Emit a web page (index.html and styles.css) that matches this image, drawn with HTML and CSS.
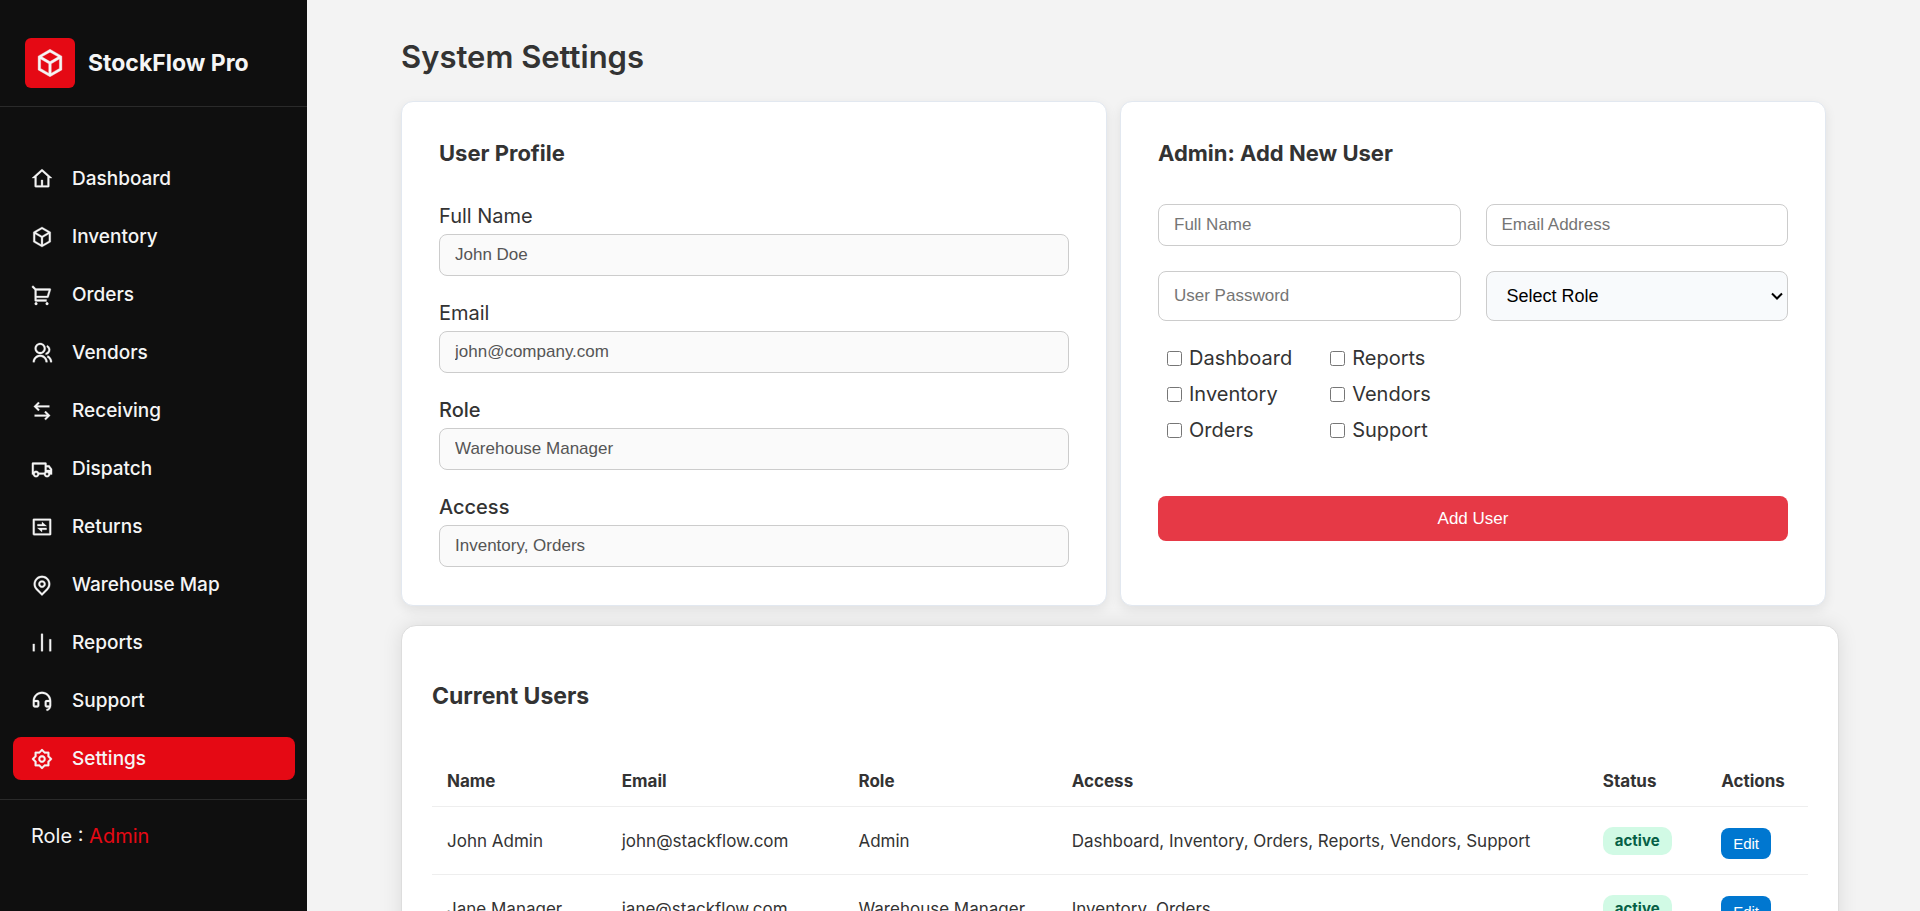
FILE: index.html
```html
<!DOCTYPE html>
<html lang="en">
<head>
<meta charset="utf-8">
<meta name="viewport" content="width=device-width, initial-scale=1">
<title>StockFlow Pro - System Settings</title>
<link rel="stylesheet" href="styles.css">
</head>
<body>
<div class="app">
  <aside class="sidebar">
    <div class="brand">
      <span class="brand-logo"><svg class="icon" viewBox="0 0 24 24" aria-hidden="true"><path d="M12 1L21.5 6.5V17.5L12 23L2.5 17.5V6.5L12 1ZM5.49388 7.0777L12.0001 10.8444L18.5062 7.07774L12 3.311L5.49388 7.0777ZM4.5 8.81329V16.3469L11.0001 20.1101V12.5765L4.5 8.81329ZM13.0001 20.11L19.5 16.3469V8.81337L13.0001 12.5765V20.11Z"/></svg></span>
      <span class="brand-name">StockFlow Pro</span>
    </div>
    <nav class="nav">
      <a class="nav-link" href="#"><svg class="icon" viewBox="0 0 24 24" aria-hidden="true"><path d="M19 21H5C4.44772 21 4 20.5523 4 20V11L1 11L11.3273 1.6115C11.7087 1.26475 12.2913 1.26475 12.6727 1.6115L23 11L20 11V20C20 20.5523 19.5523 21 19 21ZM13 19H18V9.15745L12 3.7029L6 9.15745V19H11V13H13V19Z"/></svg>Dashboard</a>
      <a class="nav-link" href="#"><svg class="icon" viewBox="0 0 24 24" aria-hidden="true"><path d="M12 1L21.5 6.5V17.5L12 23L2.5 17.5V6.5L12 1ZM5.49388 7.0777L12.0001 10.8444L18.5062 7.07774L12 3.311L5.49388 7.0777ZM4.5 8.81329V16.3469L11.0001 20.1101V12.5765L4.5 8.81329ZM13.0001 20.11L19.5 16.3469V8.81337L13.0001 12.5765V20.11Z"/></svg>Inventory</a>
      <a class="nav-link" href="#"><svg class="icon" viewBox="0 0 24 24" aria-hidden="true"><path d="M4.00436 6.41686L0.761719 3.17422L2.17593 1.76001L5.41857 5.00265H20.6603C21.2126 5.00265 21.6603 5.45037 21.6603 6.00265C21.6603 6.09997 21.6461 6.19678 21.6182 6.29L19.2182 14.29C19.0913 14.713 18.7019 15.0027 18.2603 15.0027H6.00436V17.0027H17.0044V19.0027H5.00436C4.45207 19.0027 4.00436 18.5549 4.00436 18.0027V6.41686ZM6.00436 7.00265V13.0027H17.5163L19.3163 7.00265H6.00436ZM5.50436 23.0027C4.67593 23.0027 4.00436 22.3311 4.00436 21.5027C4.00436 20.6742 4.67593 20.0027 5.50436 20.0027C6.33279 20.0027 7.00436 20.6742 7.00436 21.5027C7.00436 22.3311 6.33279 23.0027 5.50436 23.0027ZM17.5044 23.0027C16.6759 23.0027 16.0044 22.3311 16.0044 21.5027C16.0044 20.6742 16.6759 20.0027 17.5044 20.0027C18.3328 20.0027 19.0044 20.6742 19.0044 21.5027C19.0044 22.3311 18.3328 23.0027 17.5044 23.0027Z"/></svg>Orders</a>
      <a class="nav-link" href="#"><svg class="icon" viewBox="0 0 24 24" aria-hidden="true"><path d="M2 22C2 17.5817 5.58172 14 10 14C14.4183 14 18 17.5817 18 22H16C16 18.6863 13.3137 16 10 16C6.68629 16 4 18.6863 4 22H2ZM10 13C6.685 13 4 10.315 4 7C4 3.685 6.685 1 10 1C13.315 1 16 3.685 16 7C16 10.315 13.315 13 10 13ZM10 11C12.21 11 14 9.21 14 7C14 4.79 12.21 3 10 3C7.79 3 6 4.79 6 7C6 9.21 7.79 11 10 11ZM18.2837 14.7028C21.0644 15.9561 23 18.752 23 22H21C21 19.564 19.5483 17.4671 17.4628 16.5271L18.2837 14.7028ZM17.5962 3.41321C19.5944 4.23703 21 6.20361 21 8.5C21 11.3702 18.8042 13.7252 16 13.9776V11.9646C17.6967 11.7222 19 10.264 19 8.5C19 7.11935 18.2016 5.92603 17.041 5.35635L17.5962 3.41321Z"/></svg>Vendors</a>
      <a class="nav-link" href="#"><svg class="icon" viewBox="0 0 24 24" aria-hidden="true"><path d="M16.0503 12.0498L21 16.9996L16.0503 21.9493L14.636 20.5351L17.172 17.9988L4 17.9996V15.9996L17.172 15.9988L14.636 13.464L16.0503 12.0498ZM7.94975 2.0498L9.36396 3.46402L6.828 5.9988L20 5.99955V7.99955L6.828 7.9988L9.36396 10.5351L7.94975 11.9493L3 6.99955L7.94975 2.0498Z"/></svg>Receiving</a>
      <a class="nav-link" href="#"><svg class="icon" viewBox="0 0 24 24" aria-hidden="true"><path d="M8.96456 18C8.72194 19.6961 7.26324 21 5.5 21C3.73676 21 2.27806 19.6961 2.03544 18H1V6C1 5.44772 1.44772 5 2 5H16C16.5523 5 17 5.44772 17 6V8H20L23 12.0557V18H20.9646C20.7219 19.6961 19.2632 21 17.5 21C15.7368 21 14.2781 19.6961 14.0354 18H8.96456ZM15 7H3V15.0505C3.63526 14.4022 4.52066 14 5.5 14C6.8962 14 8.10145 14.8175 8.66318 16H14.3368C14.5045 15.647 14.7296 15.3264 15 15.0505V7ZM17 13H21V12.715L18.9917 10H17V13ZM17.5 19C18.1531 19 18.7087 18.5826 18.9146 18C18.9699 17.8436 19 17.6753 19 17.5C19 16.6716 18.3284 16 17.5 16C16.6716 16 16 16.6716 16 17.5C16 17.6753 16.0301 17.8436 16.0854 18C16.2913 18.5826 16.8469 19 17.5 19ZM7 17.5C7 16.6716 6.32843 16 5.5 16C4.67157 16 4 16.6716 4 17.5C4 17.6753 4.03008 17.8436 4.08535 18C4.29127 18.5826 4.84689 19 5.5 19C6.15311 19 6.70873 18.5826 6.91465 18C6.96992 17.8436 7 17.6753 7 17.5Z"/></svg>Dispatch</a>
      <a class="nav-link" href="#"><svg class="icon" viewBox="0 0 24 24" aria-hidden="true"><path d="M3 3H21C21.5523 3 22 3.44772 22 4V20C22 20.5523 21.5523 21 21 21H3C2.44772 21 2 20.5523 2 20V4C2 3.44772 2.44772 3 3 3ZM4 5V19H20V5H4ZM12 9V6.5L17 11H7V9H12ZM7 13H17V15H12V17.5L7 13Z"/></svg>Returns</a>
      <a class="nav-link" href="#"><svg class="icon" viewBox="0 0 24 24" aria-hidden="true"><path d="M12 23.7279L5.63604 17.364C2.12132 13.8492 2.12132 8.15076 5.63604 4.63604C9.15076 1.12132 14.8492 1.12132 18.364 4.63604C21.8787 8.15076 21.8787 13.8492 18.364 17.364L12 23.7279ZM16.9497 15.9497C19.6834 13.2161 19.6834 8.78392 16.9497 6.05025C14.2161 3.31658 9.78392 3.31658 7.05025 6.05025C4.31658 8.78392 4.31658 13.2161 7.05025 15.9497L12 20.8995L16.9497 15.9497ZM12 15C9.79086 15 8 13.2091 8 11C8 8.79086 9.79086 7 12 7C14.2091 7 16 8.79086 16 11C16 13.2091 14.2091 15 12 15ZM12 13C13.1046 13 14 12.1046 14 11C14 9.89543 13.1046 9 12 9C10.8954 9 10 9.89543 10 11C10 12.1046 10.8954 13 12 13Z"/></svg>Warehouse Map</a>
      <a class="nav-link" href="#"><svg class="icon" viewBox="0 0 24 24" aria-hidden="true"><path d="M2 13H4V21H2V13ZM20 8H22V21H20V8ZM11 2H13V21H11V2Z"/></svg>Reports</a>
      <a class="nav-link" href="#"><svg class="icon" viewBox="0 0 24 24" aria-hidden="true"><path d="M22 17.0022C21.999 19.8731 19.9816 22.2726 17.2872 22.8616L16.6492 20.9476C17.8532 20.7511 18.8765 20.0171 19.4649 19H17C15.8954 19 15 18.1046 15 17V13C15 11.8954 15.8954 11 17 11H19.9381C19.446 7.05369 16.0796 4 12 4C7.92038 4 4.55399 7.05369 4.06189 11H7C8.10457 11 9 11.8954 9 13V17C9 18.1046 8.10457 19 7 19H4C2.89543 19 2 18.1046 2 17V12C2 6.47715 6.47715 2 12 2C17.5228 2 22 6.47715 22 12V17.0022ZM20 17V13H17V17H20ZM4 13V17H7V13H4Z"/></svg>Support</a>
      <a class="nav-link active" href="#" aria-current="page"><svg class="icon" viewBox="0 0 24 24" aria-hidden="true"><path d="M8.68637 4.00008L11.293 1.39348C11.6835 1.00295 12.3167 1.00295 12.7072 1.39348L15.3138 4.00008H19.0001C19.5524 4.00008 20.0001 4.4478 20.0001 5.00008V8.68637L22.6067 11.293C22.9972 11.6835 22.9972 12.3167 22.6067 12.7072L20.0001 15.3138V19.0001C20.0001 19.5524 19.5524 20.0001 19.0001 20.0001H15.3138L12.7072 22.6067C12.3167 22.9972 11.6835 22.9972 11.293 22.6067L8.68637 20.0001H5.00008C4.4478 20.0001 4.00008 19.5524 4.00008 19.0001V15.3138L1.39348 12.7072C1.00295 12.3167 1.00295 11.6835 1.39348 11.293L4.00008 8.68637V5.00008C4.00008 4.4478 4.4478 4.00008 5.00008 4.00008H8.68637ZM6.00008 6.00008V9.5148L3.5148 12.0001L6.00008 14.4854V18.0001H9.5148L12.0001 20.4854L14.4854 18.0001H18.0001V14.4854L20.4854 12.0001L18.0001 9.5148V6.00008H14.4854L12.0001 3.5148L9.5148 6.00008H6.00008ZM12.0001 16.0001C9.79094 16.0001 8.00008 14.2092 8.00008 12.0001C8.00008 9.79094 9.79094 8.00008 12.0001 8.00008C14.2092 8.00008 16.0001 9.79094 16.0001 12.0001C16.0001 14.2092 14.2092 16.0001 12.0001 16.0001ZM12.0001 14.0001C13.1047 14.0001 14.0001 13.1047 14.0001 12.0001C14.0001 10.8955 13.1047 10.0001 12.0001 10.0001C10.8955 10.0001 10.0001 10.8955 10.0001 12.0001C10.0001 13.1047 10.8955 14.0001 12.0001 14.0001Z"/></svg>Settings</a>
    </nav>
    <div class="role">Role : <span class="role-name">Admin</span></div>
  </aside>

  <main class="main">
    <h1 class="page-title">System Settings</h1>
    <div class="panels">
      <section class="card">
        <h2 class="card-title">User Profile</h2>
        <div class="fields">
          <div class="field"><label for="p-name">Full Name</label><input class="input readonly" id="p-name" type="text" value="John Doe" readonly></div>
          <div class="field"><label for="p-email">Email</label><input class="input readonly" id="p-email" type="text" value="john@company.com" readonly></div>
          <div class="field"><label class="strong" for="p-role">Role</label><input class="input readonly" id="p-role" type="text" value="Warehouse Manager" readonly></div>
          <div class="field"><label class="strong" for="p-access">Access</label><input class="input readonly" id="p-access" type="text" value="Inventory, Orders" readonly></div>
        </div>
      </section>

      <section class="card">
        <h2 class="card-title">Admin: Add New User</h2>
        <form class="user-form">
          <div class="form-grid">
            <input class="input" type="text" placeholder="Full Name" aria-label="Full Name">
            <input class="input" type="email" placeholder="Email Address" aria-label="Email Address">
            <input class="input" type="password" placeholder="User Password" aria-label="User Password">
            <select class="input select" aria-label="Role">
              <option>Select Role</option>
              <option>Admin</option>
              <option>Warehouse Manager</option>
            </select>
          </div>
          <div class="checks">
            <label class="check"><input type="checkbox">Dashboard</label>
            <label class="check"><input type="checkbox">Reports</label>
            <label class="check"><input type="checkbox">Inventory</label>
            <label class="check"><input type="checkbox">Vendors</label>
            <label class="check"><input type="checkbox">Orders</label>
            <label class="check"><input type="checkbox">Support</label>
          </div>
          <button class="add-btn" type="button">Add User</button>
        </form>
      </section>
    </div>

    <section class="users-card">
      <h2 class="users-title">Current Users</h2>
      <table class="users">
        <colgroup><col class="c-name"><col class="c-email"><col class="c-role"><col class="c-access"><col class="c-status"><col class="c-actions"></colgroup>
        <thead>
          <tr><th>Name</th><th>Email</th><th>Role</th><th>Access</th><th>Status</th><th>Actions</th></tr>
        </thead>
        <tbody>
          <tr><td>John Admin</td><td>john@stackflow.com</td><td>Admin</td><td>Dashboard, Inventory, Orders, Reports, Vendors, Support</td><td><span class="status">active</span></td><td><button class="edit-btn" type="button">Edit</button></td></tr>
          <tr><td>Jane Manager</td><td>jane@stackflow.com</td><td>Warehouse Manager</td><td>Inventory, Orders</td><td><span class="status">active</span></td><td><button class="edit-btn" type="button">Edit</button></td></tr>
        </tbody>
      </table>
    </section>
  </main>
</div>
</body>
</html>
```
FILE: styles.css
```css
* {
  box-sizing: border-box;
}

body {
  margin: 0;
  background: #f3f3f3;
  color: #333;
  font-family: Inter, sans-serif;
  font-size: 20px;
  line-height: 24px;
}

h1, h2 {
  margin: 0;
}

.app {
  display: flex;
  height: 100vh;
}

.icon {
  flex: none;
  width: 22px;
  height: 22px;
  fill: currentColor;
  stroke: currentColor;
  stroke-width: 0.3;
}

/* Sidebar */
.sidebar {
  flex: none;
  width: 307px;
  background: #0f0f0f;
  color: #f5f5f5;
}

.brand {
  display: flex;
  align-items: center;
  gap: 13px;
  padding: 38px 25px 18px;
  border-bottom: 1px solid #2a2a2a;
}

.brand-logo {
  display: grid;
  place-items: center;
  width: 50px;
  height: 50px;
  border-radius: 6px;
  background: #e50914;
}

.brand-logo .icon {
  width: 30px;
  height: 30px;
}

.brand-name {
  font-size: 23px;
  font-weight: 700;
}

.nav {
  display: flex;
  flex-direction: column;
  gap: 15px;
  padding: 50px 12px 19px 13px;
  border-bottom: 1px solid #2a2a2a;
}

.nav-link {
  display: flex;
  align-items: center;
  gap: 19px;
  height: 43px;
  padding: 0 18px;
  border-radius: 8px;
  color: inherit;
  font-size: 19px;
  font-weight: 500;
  text-decoration: none;
}

.nav-link.active {
  background: #e50914;
}

.role {
  padding: 24px 31px;
}

.role-name {
  color: #e50914;
}

/* Content */
.main {
  flex: 1;
  min-width: 0;
  padding: 38px 81px 40px 94px;
  overflow-y: auto;
  scrollbar-width: none;
}

.page-title {
  font-size: 31px;
  font-weight: 600;
  line-height: 38px;
}

.panels {
  display: grid;
  grid-template-columns: 1fr 1fr;
  gap: 13px;
  margin-top: 25px;
  padding-right: 13px;
}

.card {
  padding: 37px;
  border: 1px solid #e2e8f0;
  border-radius: 12px;
  background: #fff;
  box-shadow: 0 4px 12px rgba(0, 0, 0, 0.08);
}

.card-title {
  font-size: 22px;
  font-weight: 700;
  line-height: 28px;
}

.fields {
  display: grid;
  gap: 25px;
  margin: 37px 0 1px;
}

.field {
  display: grid;
  gap: 6px;
}

.strong {
  font-weight: 500;
}

.input {
  width: 100%;
  height: 42px;
  padding: 0 15px;
  border: 1px solid #ccc;
  border-radius: 8px;
  background: #fff;
  font-family: "Liberation Sans", Arial, sans-serif;
  font-size: 17px;
}

.readonly {
  background: #fafafa;
  color: #555;
}

.form-grid {
  display: grid;
  grid-template-columns: 1fr 1fr;
  grid-template-rows: 42px 50px;
  gap: 25px;
  margin-top: 37px;
}

.form-grid .input {
  height: 100%;
}

.form-grid .select {
  appearance: none;
  padding: 0 20px;
  background: #f8fafc url("data:image/svg+xml,%3Csvg xmlns='http://www.w3.org/2000/svg' width='12' height='8' viewBox='0 0 12 8'%3E%3Cpath d='M1 1.5l5 5 5-5' fill='none' stroke='black' stroke-width='2'/%3E%3C/svg%3E") no-repeat right 4px center;
  color: #000;
  font-size: 18px;
}

.checks {
  display: grid;
  grid-template-columns: auto auto;
  justify-content: start;
  gap: 12px 38px;
  margin: 25px 9px 0;
}

.check {
  display: flex;
  align-items: center;
  gap: 7px;
}

.check input {
  width: 15px;
  height: 15px;
  margin: 0;
}

.add-btn {
  width: 100%;
  height: 45px;
  margin-top: 54px;
  border: 0;
  border-radius: 8px;
  background: #e63946;
  color: #fff;
  font-family: "Liberation Sans", Arial, sans-serif;
  font-size: 17px;
}

/* Users table */
.users-card {
  margin-top: 19px;
  padding: 55px 30px 30px;
  border: 1px solid #ddd;
  border-radius: 15px;
  background: #fff;
  box-shadow: 0 0 20px rgba(0, 0, 0, 0.1);
}

.users-title {
  font-size: 23px;
  font-weight: 700;
  line-height: 30px;
}

.users {
  width: 100%;
  margin-top: 45px;
  border-collapse: collapse;
  table-layout: fixed;
  font-size: 17px;
}

.users th,
.users td {
  padding: 0 15px;
  border-bottom: 1px solid #eee;
  text-align: left;
  white-space: nowrap;
}

.users th {
  height: 50px;
  font-weight: 700;
}

.users td {
  height: 68px;
  padding-top: 2px;
}

.c-name { width: 12.7%; }
.c-email { width: 17.2%; }
.c-role { width: 15.5%; }
.c-access { width: 38.6%; }
.c-status { width: 8.6%; }
.c-actions { width: 7.4%; }

.status {
  display: inline-block;
  padding: 0 12px;
  border-radius: 10px;
  background: #d1fae5;
  color: #065f46;
  font-size: 15px;
  font-weight: 700;
  line-height: 28px;
}

.edit-btn {
  height: 31px;
  margin-top: 4px;
  padding: 0 12px;
  border: 0;
  border-radius: 8px;
  background: #0077d0;
  color: #fff;
  font-family: "Liberation Sans", Arial, sans-serif;
  font-size: 15px;
}
```
